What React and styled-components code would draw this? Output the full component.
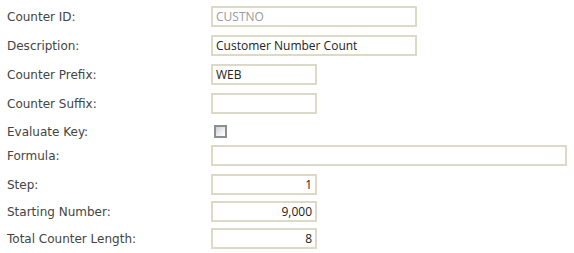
import React from 'react';
import styled, { createGlobalStyle } from 'styled-components';

const GlobalStyle = createGlobalStyle`
  html, body {
    margin: 0;
    padding: 0;
    background: #ffffff;
  }
  body {
    font-family: 'Open Sans', 'Liberation Sans', sans-serif;
  }
`;

const Form = styled.div`
  width: 574px;
  height: 253px;
  box-sizing: border-box;
  padding: 6px 0 0 7px;
  display: flex;
  flex-direction: column;
`;

const Row = styled.div`
  display: flex;
  align-items: flex-start;
  height: ${(props) => props.$h}px;
`;

const Label = styled.div`
  width: 204px;
  flex: none;
  height: ${(props) => (props.$box ? 14 : 21)}px;
  line-height: ${(props) => (props.$box ? 14 : 21)}px;
  margin-top: ${(props) => (props.$box ? 3 : 1)}px;
  font-family: 'DejaVu Sans', 'Open Sans', sans-serif;
  font-size: 12px;
  color: #444444;
`;

const Input = styled.input`
  box-sizing: border-box;
  width: ${(props) => props.$w}px;
  height: 21px;
  margin: 0;
  padding: 0 3px;
  border: 2px solid #dcd9c7;
  border-radius: 0;
  background: #ffffff;
  font-family: 'Open Sans', 'Liberation Sans', sans-serif;
  font-size: 12px;
  color: ${(props) => (props.disabled ? '#9a9a9a' : '#222222')};
  text-align: ${(props) => (props.$num ? 'right' : 'left')};
  outline: none;
`;

const Check = styled.input`
  appearance: none;
  box-sizing: border-box;
  width: 13px;
  height: 13px;
  margin: 3px 0 0 3px;
  border: 2px solid #8e8e8e;
  background: linear-gradient(135deg, #c9d0d6 0%, #f4f5f6 70%, #ffffff 100%);
`;

const fields = [
  { label: 'Counter ID:', value: 'CUSTNO', w: 206, h: 29, disabled: true },
  { label: 'Description:', value: 'Customer Number Count', w: 206, h: 29 },
  { label: 'Counter Prefix:', value: 'WEB', w: 106, h: 29 },
  { label: 'Counter Suffix:', value: '', w: 106, h: 29 },
  { label: 'Evaluate Key:', check: true, h: 23 },
  { label: 'Formula:', value: '', w: 356, h: 29 },
  { label: 'Step:', value: '1', w: 106, h: 27, num: true },
  { label: 'Starting Number:', value: '9,000', w: 106, h: 27, num: true },
  { label: 'Total Counter Length:', value: '8', w: 106, h: 25, num: true },
];

const App = () => {
  return (
    <>
      <GlobalStyle />
      <Form>
        {fields.map((f) => (
          <Row key={f.label} $h={f.h}>
            <Label $box={f.check}>{f.label}</Label>
            {f.check ? (
              <Check type="checkbox" />
            ) : (
              <Input
                $w={f.w}
                $num={f.num}
                disabled={f.disabled}
                defaultValue={f.value}
              />
            )}
          </Row>
        ))}
      </Form>
    </>
  );
};

export default App;
